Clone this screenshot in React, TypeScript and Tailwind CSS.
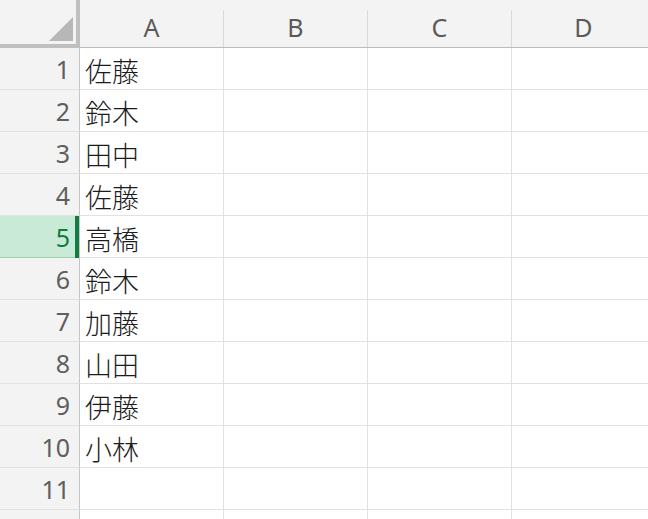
const names = ["佐藤", "鈴木", "田中", "佐藤", "高橋", "鈴木", "加藤", "山田", "伊藤", "小林", "", ""];
const cols = ["A", "B", "C", "D"];

export default function App() {
  return (
    <div className="h-[519px] w-[648px] overflow-hidden bg-white font-['Noto_Sans',sans-serif]">
      <div className="flex h-[48px] bg-[#f3f3f3]">
        <div className="flex h-[48px] w-[80px] shrink-0 items-end justify-end border-b-4 border-r-4 border-[#bfbfbf] pb-[3px] pr-[3px]">
          <svg width="24" height="24" viewBox="0 0 24 24">
            <polygon points="24,0 24,24 0,24" fill="#b7b7b7" />
          </svg>
        </div>
        {cols.map((c) => (
          <div key={c} className="flex h-[48px] w-[144px] shrink-0 border-b border-[#bcbcbc]">
            <div className="flex flex-1 items-center justify-center pt-[8px] text-[25px] leading-none text-[#5a5a5a]">
              {c}
            </div>
            <div className="mt-[10px] w-px bg-[#dadada]" />
          </div>
        ))}
      </div>
      {names.map((n, i) => {
        const active = i === 4;
        // the last row is cut by the window edge, its number falls below it
        const label = i < 11 ? i + 1 : "";
        return (
          <div key={i} className="flex h-[42px]">
            <div
              className={
                active
                  ? "relative flex w-[80px] shrink-0 items-center justify-end border-b border-r border-b-[#9fd4b3] border-r-[#c6c6c6] bg-[#caead8] pr-[9px] pt-[2px] text-[25px] leading-none text-[#107c41]"
                  : "flex w-[80px] shrink-0 items-center justify-end border-b border-r border-b-[#e1e1e1] border-r-[#c6c6c6] bg-[#f3f3f3] pr-[9px] pt-[2px] text-[25px] leading-none text-[#5f5f5f]"
              }
            >
              {label}
              {active && <div className="absolute -bottom-px right-0 top-0 w-[4px] bg-[#107c41]" />}
            </div>
            {cols.map((c, j) => (
              <div
                key={c}
                className="flex w-[144px] shrink-0 items-center border-b border-r border-[#e1e1e1] pl-[5px] pt-[3px] font-['Noto_Sans_CJK_JP',sans-serif] text-[27px] font-light leading-none text-[#1c1c1c]"
              >
                {j === 0 ? n : ""}
              </div>
            ))}
          </div>
        );
      })}
    </div>
  );
}
